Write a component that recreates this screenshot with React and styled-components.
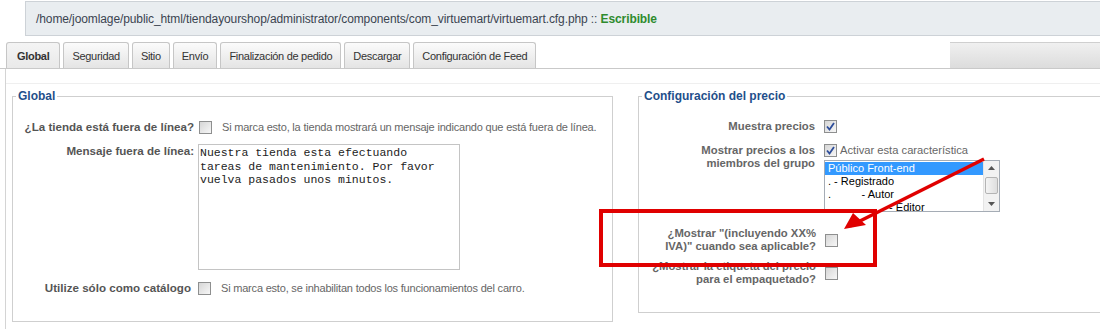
import React from "react";
import styled, { createGlobalStyle } from "styled-components";

const GlobalStyle = createGlobalStyle`
  html, body {
    margin: 0;
    padding: 0;
    background: #ffffff;
  }
  body {
    font-family: "Liberation Sans", Arial, sans-serif;
    color: #333;
  }
`;

const Page = styled.div`
  width: 1100px;
  height: 329px;
  overflow: hidden;
  position: relative;
  background: #fff;
`;

const PathBar = styled.div`
  margin: 1px 0 0 25px;
  height: 33px;
  display: flex;
  align-items: center;
  padding-left: 10px;
  background: #e9edf0;
  border: 1px solid #cdd2d7;
  border-right: none;
  font-size: 12px;
  letter-spacing: -0.1px;
  color: #3b4450;
  white-space: nowrap;
`;

const Writable = styled.b`
  color: #2e8b2e;
`;

const TabStrip = styled.div`
  margin-top: 6px;
  height: 26px;
  display: flex;
  gap: 3px;
  padding-left: 6px;
  border-bottom: 1px solid #c9c9c9;
`;

const Tab = styled.div`
  height: 25px;
  padding: 0 ${(p) => (p.$active ? 10 : 8)}px;
  display: flex;
  align-items: center;
  border: 1px solid #c6c6c6;
  border-bottom: none;
  border-radius: 3px 3px 0 0;
  background: ${(p) =>
    p.$active
      ? "linear-gradient(#f4f4f4, #e9e9e9)"
      : "linear-gradient(#fbfbfb, #e4e4e4)"};
  font-size: 11px;
  letter-spacing: -0.3px;
  font-weight: ${(p) => (p.$active ? "bold" : "normal")};
  color: #333;
  white-space: nowrap;
`;

const StripFill = styled.div`
  margin-left: auto;
  width: 150px;
  height: 25px;
  border-top: 1px solid #cfcfcf;
  background: linear-gradient(#f0f0f0, #dcdcdc);
`;

const Panel = styled.div`
  margin-left: 5px;
  border-left: 1px solid #d4d4d4;
  padding-top: 14px;
  height: 260px;
`;

const Columns = styled.div`
  display: flex;
  gap: 25px;
  padding: 5px 0 0 6px;
  border-top: 1px solid #efefef;
`;

const Fieldset = styled.fieldset`
  margin: 0;
  padding: 0;
  min-width: 0;
  border: 1px solid #cfcfcf;
  width: ${(p) => p.$width}px;
  height: ${(p) => p.$height}px;
  box-sizing: border-box;
  flex-shrink: 0;
  overflow: hidden;
`;

const Legend = styled.legend`
  margin-left: 3px;
  padding: 0 2px;
  font-size: 12px;
  line-height: 14px;
  font-weight: bold;
  color: #1f4f8b;
`;

const Form = styled.div`
  display: flex;
  flex-direction: column;
  padding-top: ${(p) => p.$top}px;
`;

const Row = styled.div`
  display: grid;
  grid-template-columns: ${(p) => p.$label}px 1fr;
  column-gap: ${(p) => p.$gap}px;
  align-items: ${(p) => p.$align || "center"};
  margin-top: ${(p) => p.$mt || 0}px;
`;

const FieldLabel = styled.div`
  text-align: right;
  font-weight: bold;
  font-size: 11.6px;
  line-height: 16px;
  color: #555;
  white-space: nowrap;
  margin-top: ${(p) => p.$mt || 0}px;
`;

const WideLabel = styled.div`
  text-align: right;
  font-weight: bold;
  font-size: 11.3px;
  line-height: 13.5px;
  color: #666;
  white-space: nowrap;
`;

const Inline = styled.div`
  display: flex;
  align-items: center;
  gap: ${(p) => p.$gap || 10}px;
`;

const Note = styled.span`
  font-size: 11px;
  letter-spacing: -0.2px;
  color: #666;
  white-space: nowrap;
`;

const Feature = styled.span`
  font-size: 11.2px;
  color: #666;
  white-space: nowrap;
`;

const Box = styled.span`
  width: 11px;
  height: 11px;
  border: 1px solid #8e8f8f;
  background: linear-gradient(135deg, #d6d6d6, #f7f7f7);
  display: inline-flex;
  align-items: center;
  justify-content: center;
  flex-shrink: 0;
`;

const Checkbox = ({ checked }) => (
  <Box>
    {checked && (
      <svg width="9" height="9" viewBox="0 0 9 9">
        <path
          d="M1 4.5 L3.5 7.5 L8 1"
          fill="none"
          stroke="#2d4d9a"
          strokeWidth="1.8"
        />
      </svg>
    )}
  </Box>
);

const TextArea = styled.textarea`
  width: 262px;
  height: 126px;
  box-sizing: border-box;
  margin: 0;
  padding: 1px 1px;
  border: 1px solid #c4c4c4;
  resize: none;
  font-family: "Liberation Mono", "Courier New", monospace;
  font-size: 11.5px;
  line-height: 13.5px;
  color: #222;
  overflow: hidden;
`;

const ListBox = styled.div`
  width: 176px;
  height: 52px;
  box-sizing: border-box;
  margin-top: 3px;
  border: 1px solid #a5acb5;
  display: flex;
  background: #fff;
  overflow: hidden;
`;

const ListItems = styled.div`
  flex: 1;
  padding-top: 1px;
`;

const ListItem = styled.div`
  height: 13px;
  line-height: 13px;
  padding-left: 3px;
  font-size: 11px;
  color: ${(p) => (p.$selected ? "#fff" : "#000")};
  background: ${(p) => (p.$selected ? "#3399ff" : "transparent")};
  white-space: pre;
`;

const ScrollBar = styled.div`
  width: 15px;
  display: flex;
  flex-direction: column;
  justify-content: space-between;
  background: #f2f2f2;
  border-left: 1px solid #e4e4e4;
`;

const ScrollBtn = styled.div`
  height: 14px;
  display: flex;
  align-items: center;
  justify-content: center;
`;

const Thumb = styled.div`
  height: 15px;
  margin: 0 1px;
  border: 1px solid #b4b4b4;
  border-radius: 2px;
  background: linear-gradient(90deg, #f4f4f4, #dedede);
`;

const Arrow = ({ up }) => (
  <svg width="7" height="4" viewBox="0 0 7 4">
    <path d={up ? "M0 4 L3.5 0 L7 4 Z" : "M0 0 L3.5 4 L7 0 Z"} fill="#555" />
  </svg>
);

const Overlay = styled.svg`
  position: absolute;
  left: 0;
  top: 0;
  pointer-events: none;
`;

const tabs = [
  "Global",
  "Seguridad",
  "Sitio",
  "Envío",
  "Finalización de pedido",
  "Descargar",
  "Configuración de Feed",
];

const offlineMessage =
  "Nuestra tienda esta efectuando\ntareas de mantenimiento. Por favor\nvuelva pasados unos minutos.";

export default function App() {
  return (
    <Page>
      <GlobalStyle />
      <PathBar>
        /home/joomlage/public_html/tiendayourshop/administrator/components/com_virtuemart/virtuemart.cfg.php&nbsp;::&nbsp;
        <Writable>Escribible</Writable>
      </PathBar>

      <TabStrip>
        {tabs.map((t, i) => (
          <Tab key={t} $active={i === 0}>
            {t}
          </Tab>
        ))}
        <StripFill />
      </TabStrip>

      <Panel>
        <Columns>
          <Fieldset $width={601} $height={233}>
            <Legend>Global</Legend>
            <Form $top={16}>
              <Row $label={181} $gap={5}>
                <FieldLabel>¿La tienda está fuera de línea?</FieldLabel>
                <Inline>
                  <Checkbox />
                  <Note>
                    Si marca esto, la tienda mostrará un mensaje indicando que
                    está fuera de línea.
                  </Note>
                </Inline>
              </Row>
              <Row $label={181} $gap={4} $align="start" $mt={9}>
                <FieldLabel $mt={-1}>Mensaje fuera de línea:</FieldLabel>
                <TextArea readOnly defaultValue={offlineMessage} />
              </Row>
              <Row $label={178} $gap={7} $mt={10}>
                <FieldLabel>Utilize sólo como catálogo</FieldLabel>
                <Inline>
                  <Checkbox />
                  <Note>
                    Si marca esto, se inhabilitan todos los funcionamientos del
                    carro.
                  </Note>
                </Inline>
              </Row>
            </Form>
          </Fieldset>

          <Fieldset $width={480} $height={224}>
            <Legend>Configuración del precio</Legend>
            <Form $top={17}>
              <Row $label={176} $gap={9}>
                <WideLabel>Muestra precios</WideLabel>
                <Inline>
                  <Checkbox checked />
                </Inline>
              </Row>
              <Row $label={176} $gap={9} $align="start" $mt={10}>
                <WideLabel>
                  Mostrar precios a los
                  <br />
                  miembros del grupo
                </WideLabel>
                <div>
                  <Inline $gap={3}>
                    <Checkbox checked />
                    <Feature>Activar esta característica</Feature>
                  </Inline>
                  <ListBox>
                    <ListItems>
                      <ListItem $selected>Público Front-end</ListItem>
                      <ListItem>. - Registrado</ListItem>
                      <ListItem>{".          - Autor"}</ListItem>
                      <ListItem>{".                   - Editor"}</ListItem>
                    </ListItems>
                    <ScrollBar>
                      <ScrollBtn>
                        <Arrow up />
                      </ScrollBtn>
                      <Thumb />
                      <ScrollBtn>
                        <Arrow />
                      </ScrollBtn>
                    </ScrollBar>
                  </ListBox>
                </div>
              </Row>
              <Row $label={177} $gap={9} $mt={15}>
                <WideLabel>
                  ¿Mostrar "(incluyendo XX%
                  <br />
                  IVA)" cuando sea aplicable?
                </WideLabel>
                <Inline>
                  <Checkbox />
                </Inline>
              </Row>
              <Row $label={177} $gap={9} $mt={6}>
                <WideLabel>
                  ¿Mostrar la etiqueta del precio
                  <br />
                  para el empaquetado?
                </WideLabel>
                <Inline>
                  <Checkbox />
                </Inline>
              </Row>
            </Form>
          </Fieldset>
        </Columns>
      </Panel>

      <Overlay width="1100" height="329" viewBox="0 0 1100 329">
        <rect
          x="601"
          y="211"
          width="274"
          height="54"
          fill="none"
          stroke="#e00000"
          strokeWidth="4"
        />
        <line
          x1="984"
          y1="159"
          x2="850"
          y2="226"
          stroke="#e00000"
          strokeWidth="3.5"
        />
        <path d="M844 229 L853 213 L866 225 Z" fill="#e00000" />
      </Overlay>
    </Page>
  );
}
